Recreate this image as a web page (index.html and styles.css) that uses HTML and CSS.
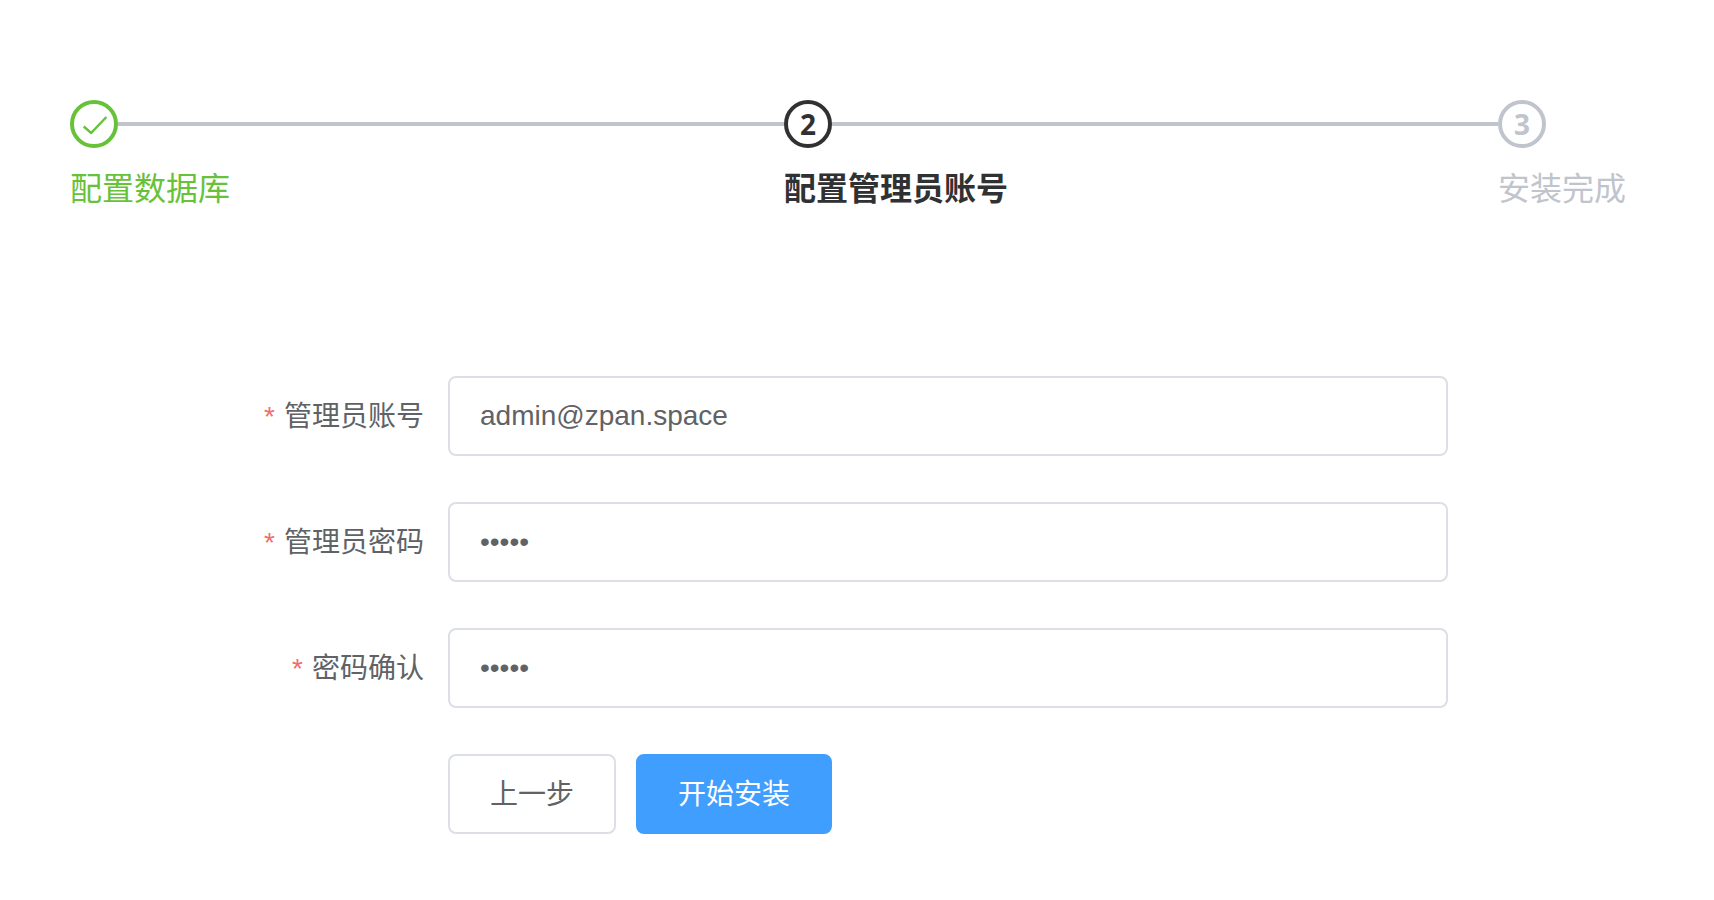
FILE: index.html
```html
<!DOCTYPE html>
<html lang="zh-CN">
<head>
<meta charset="utf-8">
<title>安装</title>
<link rel="stylesheet" href="styles.css">
</head>
<body>
<main class="page">
  <div class="steps">
    <div class="step step-success">
      <div class="step-head">
        <div class="step-icon">
          <svg class="check" viewBox="0 0 24 18" width="24" height="18" aria-hidden="true"><polyline points="0.7,10.4 8.1,17 23.4,1" fill="none" stroke="currentColor" stroke-width="2.4"/></svg>
        </div>
        <div class="step-line"></div>
      </div>
      <div class="step-title">配置数据库</div>
    </div>
    <div class="step step-process">
      <div class="step-head">
        <div class="step-icon">2</div>
        <div class="step-line"></div>
      </div>
      <div class="step-title">配置管理员账号</div>
    </div>
    <div class="step step-wait step-last">
      <div class="step-head">
        <div class="step-icon">3</div>
      </div>
      <div class="step-title">安装完成</div>
    </div>
  </div>

  <form class="form">
    <div class="form-item">
      <label class="form-label" for="email">管理员账号</label>
      <input class="form-input" id="email" type="text" value="admin@zpan.space">
    </div>
    <div class="form-item">
      <label class="form-label" for="password">管理员密码</label>
      <input class="form-input" id="password" type="password" value="12345">
    </div>
    <div class="form-item">
      <label class="form-label" for="confirm">密码确认</label>
      <input class="form-input" id="confirm" type="password" value="12345">
    </div>
    <div class="form-actions">
      <button class="btn" type="button">上一步</button>
      <button class="btn btn-primary" type="button">开始安装</button>
    </div>
  </form>
</main>
</body>
</html>
```

FILE: styles.css
```css
* {
  box-sizing: border-box;
}

html,
body {
  margin: 0;
  background: #fff;
}

body {
  font-family: "Liberation Sans", "Noto Sans CJK SC", sans-serif;
  color: #606266;
}

.page {
  padding: 100px 70px 0;
}

.steps {
  display: flex;
}

.step {
  flex: 0 0 714px;
  display: flex;
  flex-direction: column;
}

.step-last {
  flex: 0 0 auto;
}

.step-head {
  display: flex;
  align-items: center;
}

.step-icon {
  flex: none;
  width: 48px;
  height: 48px;
  border: 4px solid currentColor;
  border-radius: 50%;
  display: flex;
  align-items: center;
  justify-content: center;
  font-family: "Open Sans", sans-serif;
  font-size: 28px;
  font-weight: 700;
  line-height: 1;
}

.check {
  margin: 2px 0 0 2px;
}

.step-line {
  flex: 1;
  height: 4px;
  background: #c0c4cc;
}

.step-title {
  font-family: "Noto Sans CJK SC", sans-serif;
  font-size: 32px;
  line-height: 76px;
  white-space: nowrap;
}

.step-success {
  color: #67c23a;
}

.step-process {
  color: #303133;
}

.step-process .step-title {
  font-weight: 700;
}

.step-wait {
  color: #c0c4cc;
}

.form {
  margin-top: 152px;
  display: flex;
  flex-direction: column;
  gap: 46px;
}

.form-item {
  display: flex;
  align-items: center;
}

.form-label {
  flex: none;
  width: 378px;
  height: 80px;
  padding: 2px 24px 0 0;
  margin-right: -25px;
  text-align: right;
  font-size: 28px;
  line-height: 78px;
  font-family: "Liberation Sans", "Noto Sans CJK SC", sans-serif;
}

.form-label::before {
  content: "*";
  color: #f56c6c;
  margin-right: 9px;
}

.form-input {
  width: 1000px;
  height: 80px;
  margin-left: 25px;
  padding: 0 30px;
  border: 2px solid #dcdfe6;
  border-radius: 8px;
  background: #fff;
  color: #606266;
  font-family: "Liberation Sans", sans-serif;
  font-size: 28px;
  outline: none;
}

.form-actions {
  display: flex;
  gap: 20px;
  margin-left: 378px;
}

.btn {
  height: 80px;
  padding: 0 40px 4px;
  border: 2px solid #dcdfe6;
  border-radius: 8px;
  background: #fff;
  color: #606266;
  font-family: "Noto Sans CJK SC", sans-serif;
  font-size: 28px;
  line-height: 1;
}

.btn-primary {
  border-color: #409eff;
  background: #409eff;
  color: #fff;
}
```
